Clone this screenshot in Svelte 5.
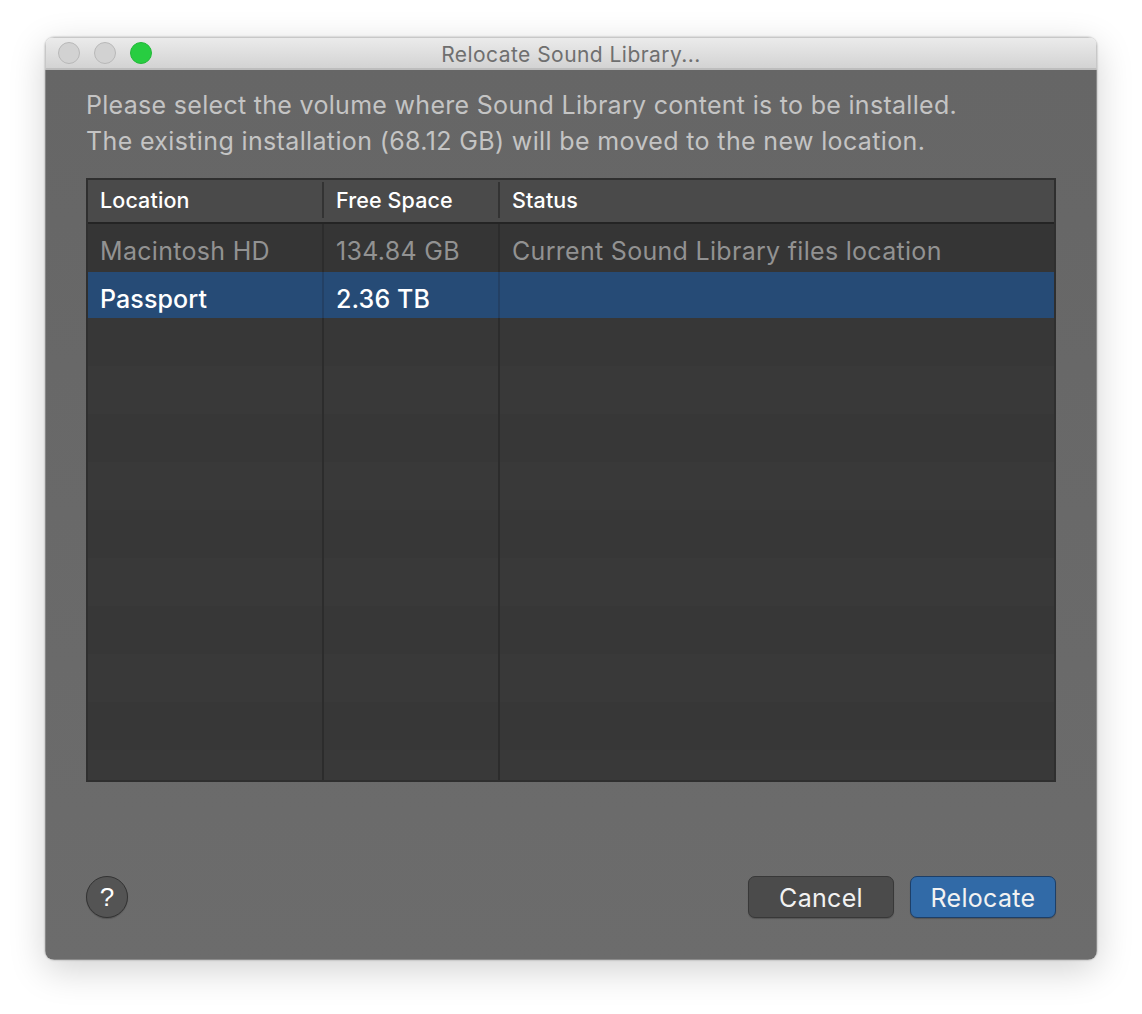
<script>
  const rows = [
    { name: "Macintosh HD", free: "134.84 GB", status: "Current Sound Library files location", kind: "current" },
    { name: "Passport", free: "2.36 TB", status: "", kind: "selected" }
  ];
  const blanks = Array.from({ length: 10 }, (_, i) => i);
</script>

<div class="page">
  <div class="window">
    <header class="titlebar">
      <div class="lights">
        <span class="light"></span>
        <span class="light"></span>
        <span class="light green"></span>
      </div>
      <span class="title">Relocate Sound Library...</span>
    </header>

    <main class="body">
      <p class="intro">
        Please select the volume where Sound Library content is to be installed.<br />
        <span class="second">The existing installation (68.12 GB) will be moved to the new location.</span>
      </p>

      <div class="table">
        <div class="row head">
          <div class="cell">Location</div>
          <div class="cell">Free Space</div>
          <div class="cell">Status</div>
        </div>
        {#each rows as row}
          <div class="row {row.kind}">
            <div class="cell">{row.name}</div>
            <div class="cell">{row.free}</div>
            <div class="cell">{row.status}</div>
          </div>
        {/each}
        {#each blanks as b}
          <div class="row blank" class:alt={b % 2 === 1}>
            <div class="cell"></div>
            <div class="cell"></div>
            <div class="cell"></div>
          </div>
        {/each}
      </div>

      <footer class="actions">
        <button class="help">?</button>
        <div class="buttons">
          <button class="btn">Cancel</button>
          <button class="btn primary">Relocate</button>
        </div>
      </footer>
    </main>
  </div>
</div>

<style>
  :global(body) {
    margin: 0;
    background: #fff;
  }

  .page {
    width: 1142px;
    height: 1014px;
    padding: 37px 45px 0;
    box-sizing: border-box;
    font-family: Inter, "Liberation Sans", sans-serif;
  }

  .window {
    width: 1052px;
    height: 923px;
    border-radius: 9px;
    overflow: hidden;
    display: flex;
    flex-direction: column;
    box-shadow: 0 10px 36px rgba(0, 0, 0, 0.18), 0 0 2px rgba(0, 0, 0, 0.35);
  }

  .titlebar {
    position: relative;
    height: 33px;
    flex: none;
    box-sizing: border-box;
    display: flex;
    align-items: center;
    justify-content: center;
    background: linear-gradient(#ebebeb, #d3d3d3);
    border: 1px solid #c8c8c8;
    border-bottom: 2px solid #bdbdbd;
  }

  .lights {
    position: absolute;
    left: 12px;
    top: 4px;
    display: flex;
    gap: 14px;
  }

  .light {
    width: 22px;
    height: 22px;
    box-sizing: border-box;
    border-radius: 50%;
    background: #d2d2d2;
    border: 1px solid #b8b8b8;
  }

  .light.green {
    background: #28cd41;
    border-color: #24b83a;
  }

  .title {
    font-size: 21px;
    letter-spacing: 0.45px;
    color: #6f6f6f;
    padding-top: 2px;
  }

  .body {
    flex: 1;
    padding: 17px 40px 0;
    display: flex;
    flex-direction: column;
    border-left: 1px solid #8a8a8a;
    border-right: 1px solid #8a8a8a;
    border-bottom: 1px solid #8a8a8a;
    box-sizing: border-box;
    background: linear-gradient(#666, #6c6c6c);
  }

  .intro {
    margin: 0 0 19px;
    font-size: 25px;
    line-height: 36px;
    letter-spacing: 0.3px;
    color: #c4c4c4;
    white-space: nowrap;
  }

  .second {
    letter-spacing: 0.36px;
  }

  .table {
    width: 970px;
    height: 604px;
    box-sizing: border-box;
    border: 2px solid #2f2f2f;
    background: #373737;
    overflow: hidden;
  }

  .row {
    display: grid;
    grid-template-columns: 236px 176px 1fr;
    height: 48px;
    background: #353535;
  }

  .row.head {
    height: 44px;
    background: #4a4a4a;
    border-bottom: 2px solid #242424;
    box-sizing: border-box;
    color: #fff;
    font-size: 21.5px;
    font-weight: 500;
    letter-spacing: 0.12px;
  }

  .cell {
    padding-left: 12px;
    display: flex;
    align-items: center;
    white-space: nowrap;
    box-sizing: border-box;
    border-right: 2px solid #2c2c2c;
  }

  .cell:last-child {
    border-right: none;
  }

  .head .cell {
    height: 36px;
    margin-top: 2px;
    border-right-color: #333;
  }

  .current .cell {
    padding-top: 6px;
  }

  .selected .cell {
    padding-top: 7px;
  }

  .current {
    color: #929292;
    font-size: 25px;
    letter-spacing: 0.3px;
  }

  .selected {
    height: 46px;
    background: #264b76;
    color: #fff;
    font-size: 25px;
    font-weight: 500;
    letter-spacing: 0.12px;
  }

  .selected .cell {
    border-right-color: #234064;
  }

  .blank {
    background: #373737;
  }

  .blank.alt {
    background: #393939;
  }

  .actions {
    margin-top: 94px;
    display: flex;
    justify-content: space-between;
    align-items: center;
  }

  .help {
    width: 42px;
    height: 42px;
    padding: 0;
    border-radius: 50%;
    border: 1px solid #333;
    background: #545454;
    color: #fff;
    font-family: "Liberation Sans", sans-serif;
    font-size: 26px;
    box-shadow: 0 1px 1px rgba(0, 0, 0, 0.2);
  }

  .buttons {
    display: flex;
    gap: 16px;
  }

  .btn {
    width: 146px;
    height: 42px;
    padding: 2px 0 0;
    box-sizing: border-box;
    border-radius: 7px;
    border: 1px solid #383838;
    background: #4b4b4b;
    color: #f2f2f2;
    font-family: inherit;
    font-size: 25px;
    letter-spacing: 0.3px;
    box-shadow: 0 1px 1px rgba(0, 0, 0, 0.2);
  }

  .btn.primary {
    background: #316aa7;
    border-color: #1d3f68;
  }
</style>
